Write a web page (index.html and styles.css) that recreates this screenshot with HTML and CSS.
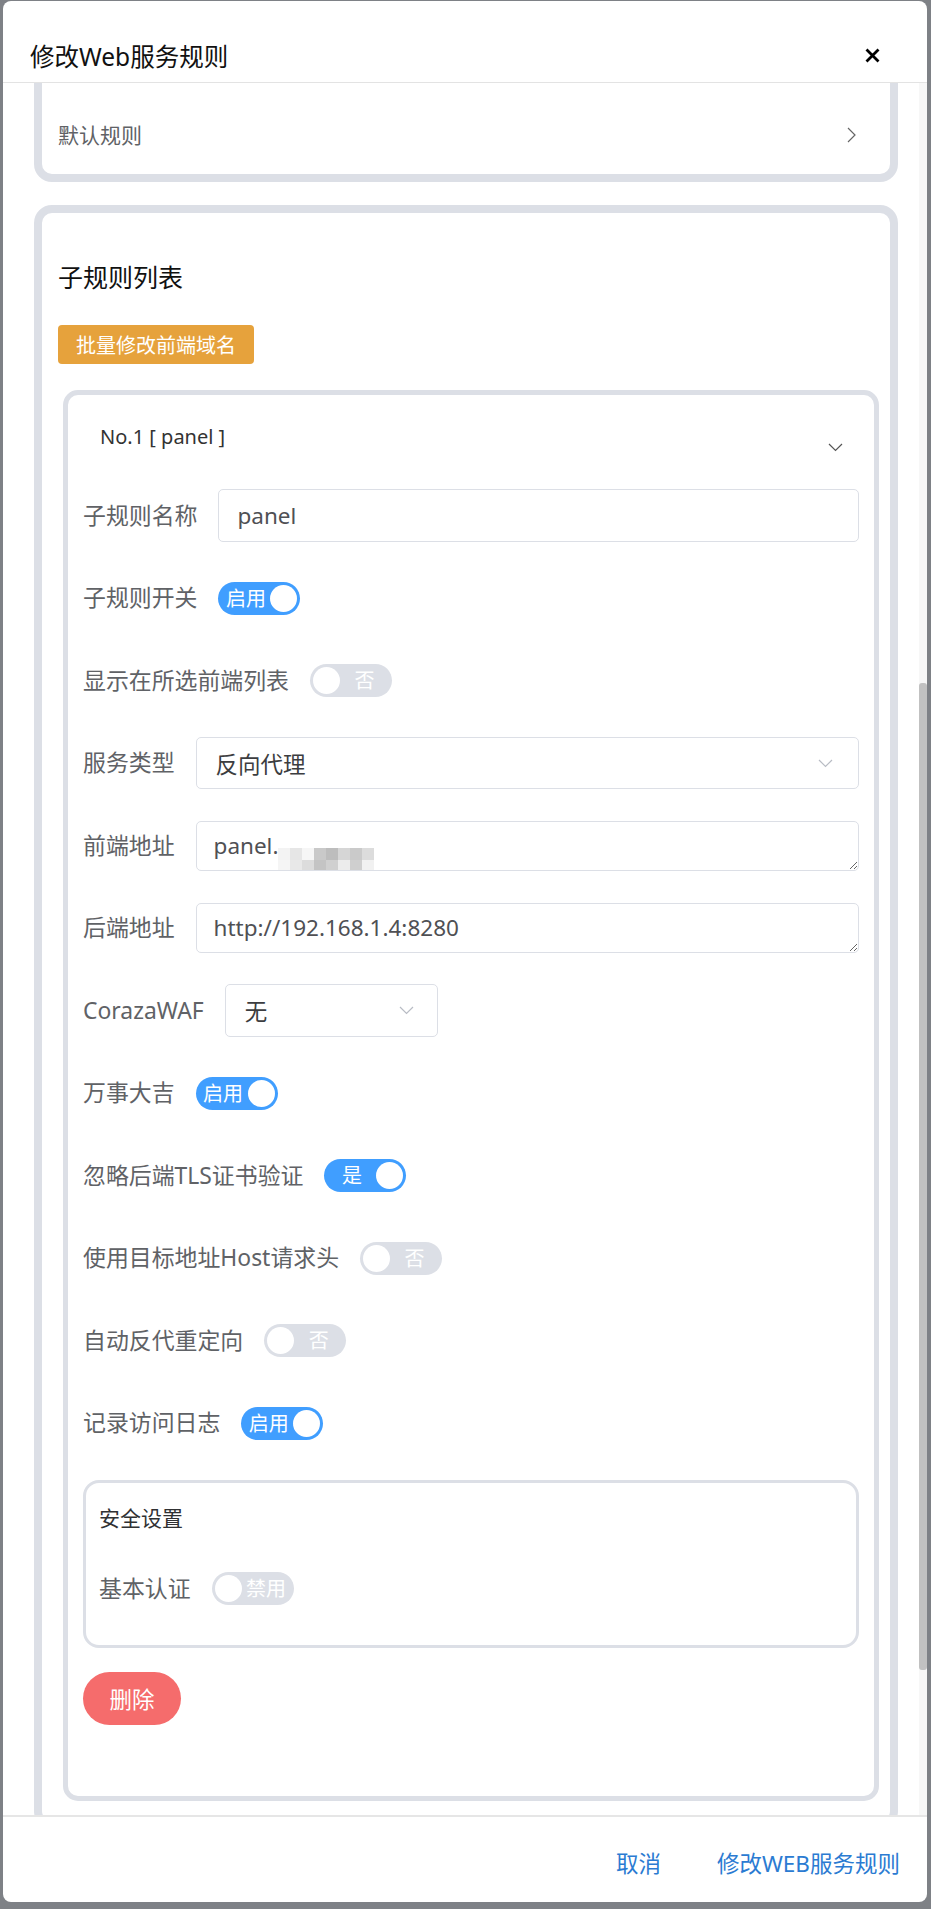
FILE: index.html
```html
<!DOCTYPE html>
<html>
<head>
  <meta charset="utf-8">
  <title>修改Web服务规则</title>
  <link rel="stylesheet" href="styles.css">
</head>
<body>
  <div class="dialog">
    <!-- Header -->
    <div class="dialog-header">
      <span class="dialog-title">修改Web服务规则</span>
      <svg class="close-icon" viewBox="0 0 15 15">
        <path d="M1.5 1.5 L13.5 13.5 M13.5 1.5 L1.5 13.5" stroke="#000" stroke-width="2.8" fill="none"/>
      </svg>
    </div>

    <!-- Scrollable body -->
    <div class="dialog-body">
      <div class="body-content">
        <div class="card default-card">
          <div class="default-row">
            <span>默认规则</span>
            <svg class="chevron-right" viewBox="0 0 9 16">
              <path d="M1 1 L8 8 L1 15" stroke="#666" stroke-width="1.2" fill="none"/>
            </svg>
          </div>
        </div>

        <div class="card sub-list">
          <h3 class="list-title">子规则列表</h3>
          <button class="btn-warning">批量修改前端域名</button>

          <div class="sub-card">
            <div class="sub-header">
              <span class="sub-title">No.1 [ panel ]</span>
              <svg class="chevron-down" viewBox="0 0 15 9">
                <path d="M1 1 L7.5 7.5 L14 1" stroke="#555" stroke-width="1.2" fill="none"/>
              </svg>
            </div>

            <div class="form">
              <div class="form-row">
                <label class="form-label">子规则名称</label>
                <input class="text-input" type="text" value="panel">
              </div>
              <div class="form-row">
                <label class="form-label">子规则开关</label>
                <div class="switch on"><span class="switch-text">启用</span><span class="switch-knob"></span></div>
              </div>
              <div class="form-row">
                <label class="form-label">显示在所选前端列表</label>
                <div class="switch"><span class="switch-knob"></span><span class="switch-text">否</span></div>
              </div>
              <div class="form-row">
                <label class="form-label">服务类型</label>
                <div class="select">
                  <span>反向代理</span>
                  <svg class="select-arrow" viewBox="0 0 15 9">
                    <path d="M1 1 L7.5 7.5 L14 1" stroke="#b8bcc4" stroke-width="1.2" fill="none"/>
                  </svg>
                </div>
              </div>
              <div class="form-row">
                <label class="form-label">前端地址</label>
                <div class="textarea">panel.<span class="mosaic"><i style="background:#f3f3f3"></i><i style="background:#e6e6e6"></i><i style="background:#f6f6f6"></i><i style="background:#c9c9c9"></i><i style="background:#bdbdbd"></i><i style="background:#d6d6d6"></i><i style="background:#cacaca"></i><i style="background:#dcdcdc"></i><i style="background:#f5f5f5"></i><i style="background:#e8e8e8"></i><i style="background:#dcdcdc"></i><i style="background:#c4c4c4"></i><i style="background:#d0d0d0"></i><i style="background:#ececec"></i><i style="background:#cfcfcf"></i><i style="background:#f1f1f1"></i></span></div>
              </div>
              <div class="form-row">
                <label class="form-label">后端地址</label>
                <div class="textarea">http://192.168.1.4:8280</div>
              </div>
              <div class="form-row">
                <label class="form-label">CorazaWAF</label>
                <div class="select select-small">
                  <span>无</span>
                  <svg class="select-arrow" viewBox="0 0 15 9">
                    <path d="M1 1 L7.5 7.5 L14 1" stroke="#b8bcc4" stroke-width="1.2" fill="none"/>
                  </svg>
                </div>
              </div>
              <div class="form-row">
                <label class="form-label">万事大吉</label>
                <div class="switch on"><span class="switch-text">启用</span><span class="switch-knob"></span></div>
              </div>
              <div class="form-row">
                <label class="form-label">忽略后端TLS证书验证</label>
                <div class="switch on"><span class="switch-text">是</span><span class="switch-knob"></span></div>
              </div>
              <div class="form-row">
                <label class="form-label">使用目标地址Host请求头</label>
                <div class="switch"><span class="switch-knob"></span><span class="switch-text">否</span></div>
              </div>
              <div class="form-row">
                <label class="form-label">自动反代重定向</label>
                <div class="switch"><span class="switch-knob"></span><span class="switch-text">否</span></div>
              </div>
              <div class="form-row">
                <label class="form-label">记录访问日志</label>
                <div class="switch on"><span class="switch-text">启用</span><span class="switch-knob"></span></div>
              </div>

              <!-- Security settings -->
              <div class="security">
                <div class="security-title">安全设置</div>
                <div class="form-row">
                  <label class="form-label">基本认证</label>
                  <div class="switch"><span class="switch-knob"></span><span class="switch-text">禁用</span></div>
                </div>
              </div>
            </div>

            <button class="btn-danger">删除</button>
          </div>
        </div>
      </div>

      <div class="scrollbar"><div class="scroll-thumb"></div></div>
    </div>

    <!-- Footer -->
    <div class="dialog-footer">
      <button class="text-btn">取消</button>
      <button class="text-btn">修改WEB服务规则</button>
    </div>
  </div>
</body>
</html>
```

FILE: styles.css
```css
* {
  box-sizing: border-box;
}
html, body {
  margin: 0;
}
body {
  height: 1909px;
  overflow: hidden;
  background-color: #7e8186;
  font-family: "Noto Sans", "Noto Sans CJK SC", sans-serif;
}
.dialog {
  margin: 1px 0 0 3px;
  width: 924px;
  height: 1901px;
  display: flex;
  flex-direction: column;
  background-color: #fff;
  border-radius: 8px;
  overflow: hidden;
}

/* header */
.dialog-header {
  flex: none;
  height: 82px;
  display: flex;
  align-items: center;
  justify-content: space-between;
  padding: 30px 47px 0 27px;
  border-bottom: 1px solid #e3e3e3;
}
.dialog-title {
  font-size: 24.5px;
  line-height: 34px;
  color: #111;
}
.close-icon {
  width: 15px;
  height: 15px;
  margin-top: -2px;
}

/* body */
.dialog-body {
  flex: 1;
  min-height: 0;
  display: flex;
  overflow: hidden;
}
.body-content {
  flex: 1;
  padding: 0 21px 0 31px;
  overflow: hidden;
}
.scrollbar {
  flex: none;
  width: 8px;
  background-color: #f7f7f7;
}
.scroll-thumb {
  margin-top: 600px;
  height: 987px;
  background-color: #c1c1c1;
  border-radius: 3px;
}

.card {
  border: 8px solid #dcdfe6;
  border-radius: 18px;
  background-color: #fff;
}
.default-card {
  margin-top: -17px;
  padding: 24px 34px 0 16px;
}
.default-row {
  height: 76px;
  padding-bottom: 5px;
  display: flex;
  align-items: center;
  justify-content: space-between;
  font-size: 21px;
  color: #606266;
}
.chevron-right {
  width: 9px;
  height: 16px;
  margin-top: 3px;
}
.sub-list {
  margin-top: 23px;
  padding: 47px 11px 20px 16px;
}
.list-title {
  margin: 0;
  font-size: 25px;
  line-height: 34px;
  font-weight: normal;
  color: #111;
}
.btn-warning {
  display: block;
  margin-top: 31px;
  height: 39px;
  padding: 0 18px;
  border: none;
  border-radius: 4px;
  background-color: #e6a23c;
  color: #fff;
  font-family: inherit;
  font-size: 20px;
}

/* sub rule card */
.sub-card {
  margin: 26px 0 0 5px;
  padding: 0 15px 71px;
  border: 5px solid #dcdfe6;
  border-radius: 15px;
}
.sub-header {
  height: 84px;
  display: flex;
  align-items: flex-start;
  justify-content: space-between;
  padding: 28px 16px 0 17px;
}
.sub-title {
  font-size: 20px;
  line-height: 28px;
  color: #333;
}
.chevron-down {
  width: 15px;
  height: 9px;
  margin-top: 20px;
}

.form {
  display: flex;
  flex-direction: column;
  gap: 30.5px;
  padding-top: 10.5px;
}
.form-row {
  height: 52px;
  display: flex;
  align-items: center;
}
.form-label {
  margin-right: 21px;
  white-space: nowrap;
  font-size: 22.9px;
  line-height: 30px;
  color: #606266;
}
.text-input {
  flex: 1;
  height: 53px;
  padding: 0 18px;
  border: 1px solid #dcdfe6;
  border-radius: 5px;
  font-family: inherit;
  font-size: 22.5px;
  color: #4f5054;
  outline: none;
}
.select {
  flex: 1;
  height: 52px;
  display: flex;
  align-items: center;
  justify-content: space-between;
  padding: 0 25px 0 19px;
  border: 1px solid #dcdfe6;
  border-radius: 5px;
  font-size: 22.5px;
  color: #3c3d40;
}
.select-small {
  flex: none;
  width: 213px;
  height: 53px;
  padding-right: 23px;
}
.select-arrow {
  width: 15px;
  height: 9px;
}
.textarea {
  flex: 1;
  height: 50px;
  padding: 8px 17px;
  border: 1px solid #dcdfe6;
  border-radius: 5px;
  font-size: 22.5px;
  line-height: 32px;
  color: #4f5054;
  white-space: nowrap;
  resize: vertical;
  overflow: hidden;
}
.mosaic {
  display: inline-grid;
  grid-template-columns: repeat(8, 12px);
  grid-auto-rows: 12px;
  vertical-align: -6px;
  filter: blur(0.6px);
}
.mosaic i {
  display: block;
}

/* switches */
.switch {
  flex: none;
  width: 82px;
  height: 33px;
  display: flex;
  align-items: center;
  padding: 3px;
  border-radius: 17px;
  background-color: #dcdfe6;
}
.switch.on {
  background-color: #409eff;
}
.switch-text {
  flex: 1;
  text-align: center;
  font-size: 20px;
  line-height: 27px;
  color: #fff;
}
.switch-knob {
  flex: none;
  width: 27px;
  height: 27px;
  border-radius: 50%;
  background-color: #fff;
}

.security {
  padding: 20px 13px 30px;
  border: 3px solid #dcdfe6;
  border-radius: 16px;
}
.security-title {
  font-size: 21px;
  line-height: 30px;
  color: #303133;
}
.security .form-row {
  margin-top: 30px;
}
.btn-danger {
  display: block;
  margin-top: 24px;
  width: 98px;
  height: 53px;
  border: none;
  border-radius: 27px;
  background-color: #f56c6c;
  color: #fff;
  font-family: inherit;
  font-size: 22.5px;
}

/* footer */
.dialog-footer {
  flex: none;
  height: 87px;
  display: flex;
  align-items: center;
  justify-content: flex-end;
  gap: 56px;
  padding: 5px 27px 0 0;
  border-top: 2px solid #e6e6e6;
}
.text-btn {
  padding: 0;
  border: none;
  background: none;
  font-family: inherit;
  font-size: 22.5px;
  color: #2b7bd2;
}
```
